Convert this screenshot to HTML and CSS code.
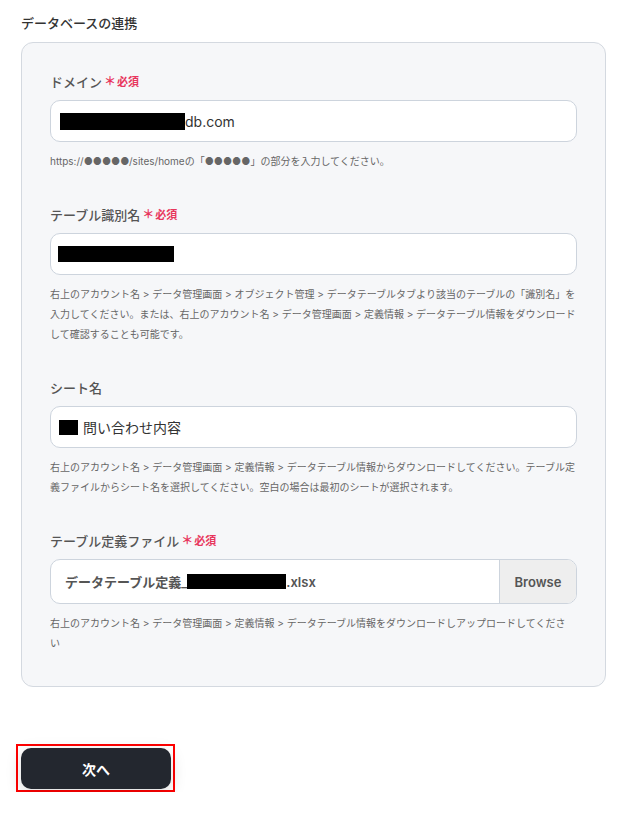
FILE: index.html
```html
<!DOCTYPE html>
<html lang="ja">
<head>
<meta charset="utf-8">
<link rel="stylesheet" href="styles.css">
</head>
<body>
<h2 class="section-title">データベースの連携</h2>
<div class="card">
  <div class="field">
    <div class="label">ドメイン<span class="req"><span class="ast">＊</span>必須</span></div>
    <div class="input"><span class="mask mask-domain"></span>db.com</div>
    <p class="help">https://●●●●●/sites/homeの「●●●●●」の部分を入力してください。</p>
  </div>
  <div class="field">
    <div class="label">テーブル識別名<span class="req"><span class="ast">＊</span>必須</span></div>
    <div class="input"><span class="mask mask-table"></span></div>
    <p class="help">右上のアカウント名 &gt; データ管理画面 &gt; オブジェクト管理 &gt; データテーブルタブより該当のテーブルの「識別名」を<br>入力してください。または、右上のアカウント名 &gt; データ管理画面 &gt; 定義情報 &gt; データテーブル情報をダウンロード<br>して確認することも可能です。</p>
  </div>
  <div class="field">
    <div class="label">シート名</div>
    <div class="input"><span class="mask mask-sheet"></span>問い合わせ内容</div>
    <p class="help">右上のアカウント名 &gt; データ管理画面 &gt; 定義情報 &gt; データテーブル情報からダウンロードしてください。テーブル定<br>義ファイルからシート名を選択してください。空白の場合は最初のシートが選択されます。</p>
  </div>
  <div class="field">
    <div class="label">テーブル定義ファイル<span class="req"><span class="ast">＊</span>必須</span></div>
    <div class="file">
      <div class="file-name">データテーブル定義_<span class="mask mask-file"></span>.xlsx</div>
      <div class="browse">Browse</div>
    </div>
    <p class="help">右上のアカウント名 &gt; データ管理画面 &gt; 定義情報 &gt; データテーブル情報をダウンロードしアップロードしてくださ<br>い</p>
  </div>
</div>
<div class="next-wrap"><button class="next">次へ</button></div>
</body>
</html>
```

FILE: styles.css
```css
* { box-sizing: border-box; }
body {
  margin: 0;
  padding: 14px 21px 0;
  background: #fff;
  font-family: Inter, "Noto Sans CJK JP", sans-serif;
  color: #333;
}
.section-title {
  margin: 0 0 10px;
  font-size: 13px;
  line-height: 18px;
  font-weight: 500;
  color: #333;
}
.card {
  width: 585px;
  background: #f6f7f9;
  border: 1px solid #d4d9e0;
  border-radius: 12px;
  padding: 30px 28px 33px;
  display: flex;
  flex-direction: column;
  gap: 35px;
}
.label {
  font-size: 13px;
  line-height: 18px;
  font-weight: 500;
  color: #555;
  margin-bottom: 9px;
  display: flex;
  align-items: center;
}
.req {
  color: #e8365d;
  font-size: 11px;
  font-weight: 700;
  margin-left: 2px;
  display: inline-flex;
  align-items: center;
}
.ast { font-size: 12px; margin-right: 1px; }
.input {
  height: 42px;
  background: #fff;
  border: 1px solid #cdd4dd;
  border-radius: 10px;
  display: flex;
  align-items: center;
  padding: 0 8px;
  font-size: 14px;
  color: #333;
}
.mask { display: inline-block; background: #000; }
.mask-domain { width: 125px; height: 17px; margin-left: 1px; }
.mask-table { width: 116px; height: 16px; margin-left: -1px; }
.mask-sheet { width: 19px; height: 15px; margin-right: 5px; }
.mask-file { width: 99px; height: 15px; }
.help {
  margin: 9px 0 0;
  font-size: 10px;
  line-height: 20px;
  color: #666;
  white-space: nowrap;
}
.file {
  height: 45px;
  background: #fff;
  border: 1px solid #cdd4dd;
  border-radius: 10px;
  display: flex;
  overflow: hidden;
}
.file-name {
  flex: 1;
  display: flex;
  align-items: center;
  padding-left: 14px;
  font-size: 13px;
  font-weight: 600;
  color: #555;
}
.browse {
  width: 77px;
  background: #eeeeee;
  border-left: 1px solid #cdd4dd;
  display: flex;
  align-items: center;
  justify-content: center;
  font-size: 13px;
  font-weight: 600;
  color: #555;
}
.next-wrap {
  display: inline-block;
  margin: 57px 0 0 -5px;
  border: 2px solid #ff0000;
  padding: 2px 2px 1px 3px;
}
.next {
  display: block;
  width: 150px;
  height: 41px;
  border: none;
  border-radius: 10px;
  background: #23272f;
  color: #fff;
  font-family: Inter, "Noto Sans CJK JP", sans-serif;
  font-size: 14px;
  font-weight: 700;
  box-shadow: 0 4px 16px rgba(0, 0, 0, 0.15);
}
```
